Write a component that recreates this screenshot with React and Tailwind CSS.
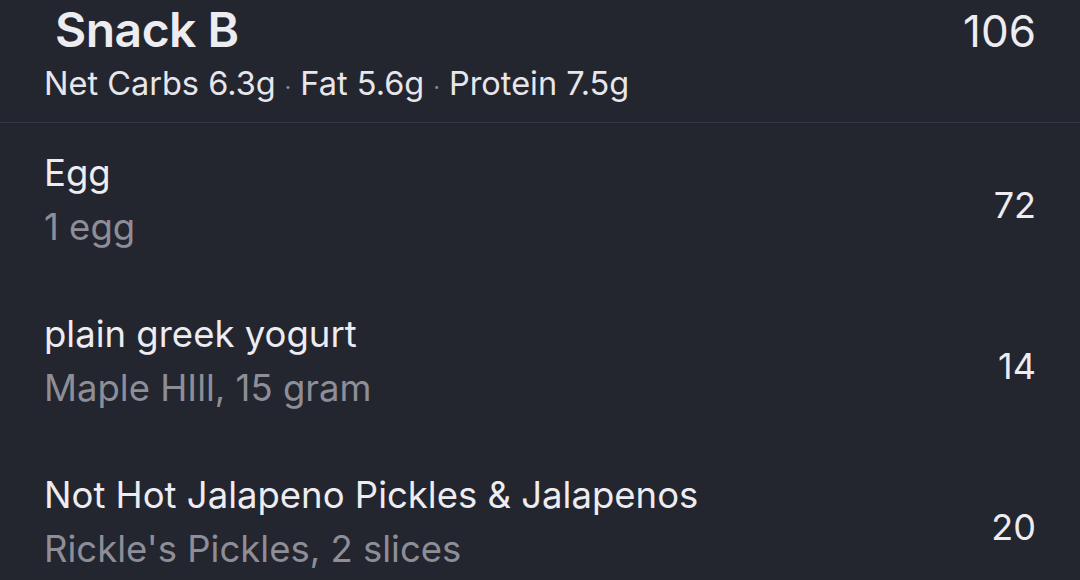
import React from 'react';

const items = [
  { name: 'Egg', detail: '1 egg', cal: 72 },
  { name: 'plain greek yogurt', detail: 'Maple HIll, 15 gram', cal: 14 },
  { name: 'Not Hot Jalapeno Pickles & Jalapenos', detail: "Rickle's Pickles, 2 slices", cal: 20 },
];

const App = () => {
  return (
    <div className="w-[1080px] h-[580px] overflow-hidden bg-[#23252f] text-[#ececf1]" style={{ fontFamily: 'Inter, "Noto Sans", sans-serif' }}>
      <div className="h-[123px] border-b border-[#363843] flex justify-between pl-[44px] pr-[44px]">
        <div className="flex flex-col">
          <div className="pl-[11px] pt-[1px] text-[48px] leading-[58px] font-semibold tracking-[-0.5px]">Snack B</div>
          <div className="mt-[5px] text-[32.5px] leading-[40px] text-[#e6e6eb]">
            Net Carbs 6.3g <span className="text-[#8e8e98] text-[22px]">·</span> Fat 5.6g <span className="text-[#8e8e98] text-[22px]">·</span> Protein 7.5g
          </div>
        </div>
        <div className="pt-[5px] text-[44px] leading-[52px]">106</div>
      </div>
      {items.map((item) => (
        <div key={item.name} className="h-[161px] flex items-center justify-between pl-[44px] pr-[44px]">
          <div className="flex flex-col pb-[8px]">
            <div className="text-[36.5px] leading-[54px]">{item.name}</div>
            <div className="text-[36.5px] leading-[54px] text-[#8e8e98]">{item.detail}</div>
          </div>
          <div className="pt-[3px] text-[36px] leading-[54px]">{item.cal}</div>
        </div>
      ))}
    </div>
  );
};

export default App;
